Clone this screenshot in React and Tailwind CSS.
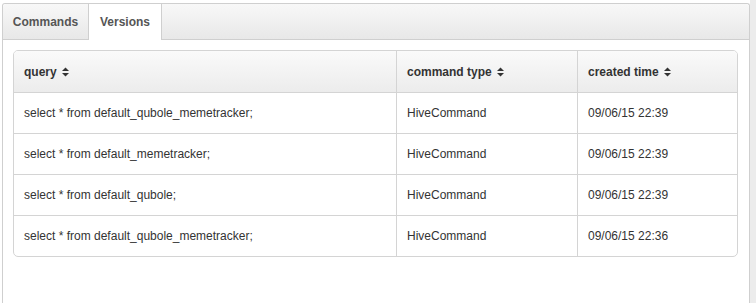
const rows = [
  { query: "select * from default_qubole_memetracker;", type: "HiveCommand", time: "09/06/15 22:39" },
  { query: "select * from default_memetracker;", type: "HiveCommand", time: "09/06/15 22:39" },
  { query: "select * from default_qubole;", type: "HiveCommand", time: "09/06/15 22:39" },
  { query: "select * from default_qubole_memetracker;", type: "HiveCommand", time: "09/06/15 22:36" },
];

function SortIcon() {
  return (
    <svg width="7" height="10" viewBox="0 0 7 10" className="ml-[5px] fill-[#333]">
      <path d="M0 4 L3.5 0.5 L7 4 Z" />
      <path d="M0 6 L3.5 9.5 L7 6 Z" />
    </svg>
  );
}

function HeaderCell({ label, className }) {
  return (
    <div className={`flex items-center pl-[10px] h-[41px] font-bold ${className}`}>
      {label}
      <SortIcon />
    </div>
  );
}

export default function App() {
  return (
    <div className="w-[756px] h-[303px] flex bg-white text-[12px] text-[#333] font-['Liberation_Sans',Arial,sans-serif] overflow-hidden">
      <div className="w-[2px] shrink-0" />
      <div className="w-[748px] shrink-0 mt-[3px] flex flex-col border border-[#cfcfcf] border-b-0 rounded-t-[3px]">
        <div className="flex h-[36px] bg-gradient-to-b from-[#f8f8f8] to-[#e8e8e8] border-b border-[#cfcfcf] rounded-t-[3px]">
          <div className="w-[86px] flex items-center justify-center font-bold text-[#555] border-r border-[#cfcfcf]">
            Commands
          </div>
          <div className="w-[73px] -mb-px flex items-center justify-center font-bold text-[#555] bg-white border-r border-[#cfcfcf]">
            Versions
          </div>
        </div>
        <div className="flex-1 bg-white pt-[10px] pl-[10px] pr-[11px]">
          <div className="w-[725px] border border-[#d4d4d4] rounded-[5px] overflow-hidden">
            <div className="flex bg-gradient-to-b from-[#fafafa] to-[#ececec] border-b border-[#d4d4d4]">
              <HeaderCell label="query" className="w-[383px] border-r border-[#d4d4d4]" />
              <HeaderCell label="command type" className="w-[181px] border-r border-[#d4d4d4]" />
              <HeaderCell label="created time" className="flex-1" />
            </div>
            {rows.map((r, i) => (
              <div key={i} className={`flex h-[40px] ${i < rows.length - 1 ? "box-content border-b border-[#d4d4d4]" : ""}`}>
                <div className="w-[383px] flex items-center pl-[10px] border-r border-[#d4d4d4]">{r.query}</div>
                <div className="w-[181px] flex items-center pl-[10px] border-r border-[#d4d4d4]">{r.type}</div>
                <div className="flex-1 flex items-center pl-[10px]">{r.time}</div>
              </div>
            ))}
          </div>
        </div>
      </div>
      <div className="flex-1 bg-[#ececec]" />
    </div>
  );
}
